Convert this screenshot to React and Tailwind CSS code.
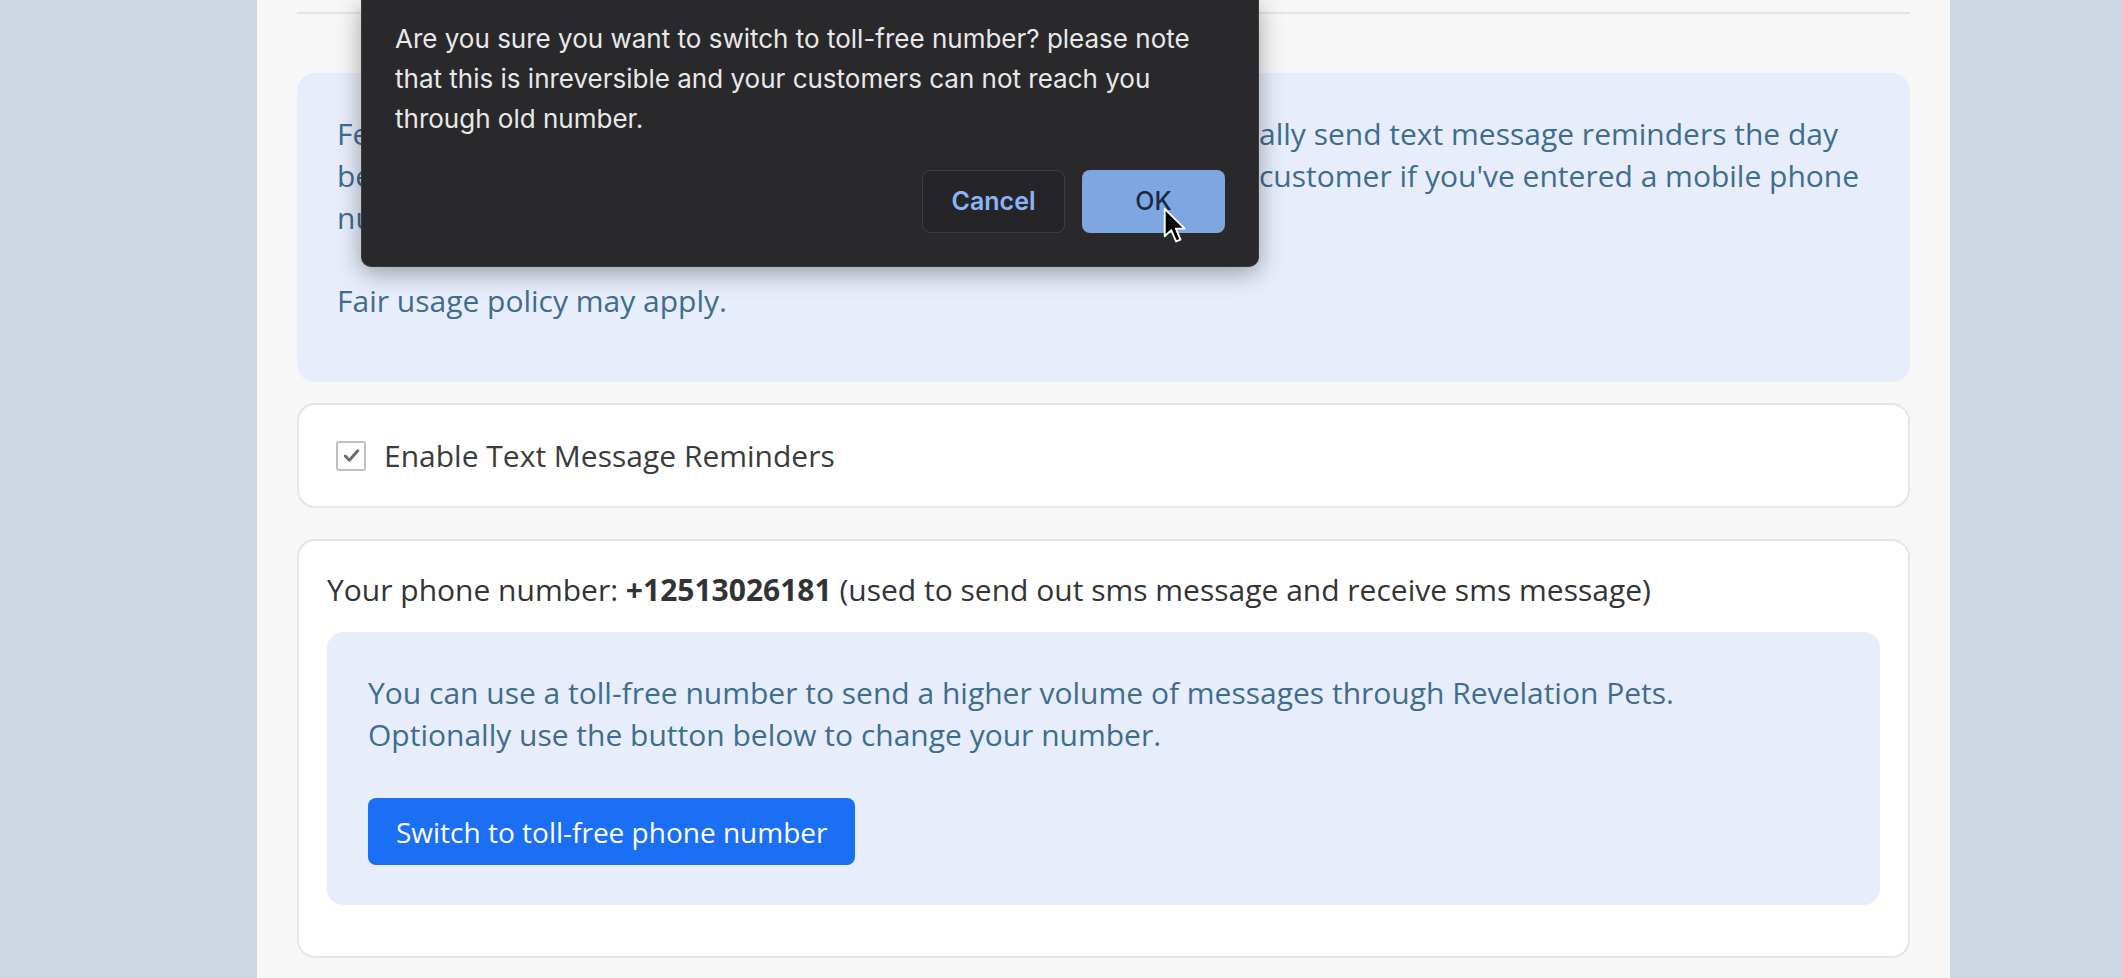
export default function App() {
  return (
    <div className="relative h-[978px] w-full overflow-hidden bg-[#cdd8e3]">
      <div className="ml-[257px] h-full w-[1693px] bg-[#f7f7f7] px-[40px] pt-[12px] font-['Open_Sans',sans-serif]">
        <div className="h-[2px] bg-[#e4e4e4]" />

        {/* SMS info */}
        <div className="mt-[59px] rounded-[18px] bg-[#e7edfb] px-[40px] pt-[40px] pb-[60px] text-[30px] leading-[42px] text-[#3e6d8f]">
          <div className="whitespace-nowrap">
            <div className="flex">
              <span className="w-[922px] shrink-0">Feature: With this option enabled, Revelation Pets will automatic</span>
              <span>ally send text message reminders the day</span>
            </div>
            <div className="flex">
              <span className="w-[922px] shrink-0">before the scheduled grooming or boarding appointment to each</span>
              <span>customer if you've entered a mobile phone</span>
            </div>
            <div>number for them.</div>
          </div>
          <p className="mt-[41px]">Fair usage policy may apply.</p>
        </div>

        {/* Enable checkbox */}
        <div className="mt-[21px] flex h-[105px] items-center gap-[18px] rounded-[18px] border-2 border-[#e6e6e6] bg-white pl-[37px]">
          <div className="flex h-[30px] w-[30px] items-center justify-center rounded-[3px] border-2 border-[#bfbfbf] bg-white">
            <svg viewBox="0 0 20 20" className="h-[21px] w-[21px]" fill="none" stroke="#6b6b6b" strokeWidth="2.8" strokeLinecap="round" strokeLinejoin="round">
              <path d="M4 10.5l4 4 8-9" />
            </svg>
          </div>
          <span className="text-[30px] leading-[42px] text-[#3b3b3b]">Enable Text Message Reminders</span>
        </div>

        {/* Phone number */}
        <div className="mt-[31px] rounded-[18px] border-2 border-[#e6e6e6] bg-white px-[28px] pt-[28px] pb-[51px]">
          <p className="text-[30px] leading-[42px] text-[#333333]">
            Your phone number: <span className="font-bold">+12513026181</span> (used to send out sms message and receive sms message)
          </p>
          <div className="mt-[21px] rounded-[16px] bg-[#e7edfb] px-[41px] py-[40px] text-[30px] leading-[42px] text-[#3e6d8f]">
            <p>
              You can use a toll-free number to send a higher volume of messages through Revelation Pets.
              <br />
              Optionally use the button below to change your number.
            </p>
            <button className="mt-[42px] h-[67px] rounded-[8px] bg-[#1a6ff4] px-[28px] text-[28px] text-white">
              Switch to toll-free phone number
            </button>
          </div>
        </div>
      </div>

      {/* confirm dialog */}
      <div className="absolute left-[361px] top-0 h-[267px] w-[898px] rounded-b-[10px] border border-t-0 border-[#3a3a3c] bg-[#29292b] px-[33px] pt-[19px] shadow-[0_6px_24px_rgba(0,0,0,0.35)] font-['Inter',sans-serif]">
        <p className="text-[26px] leading-[40px] text-[#e8e8ea]">
          Are you sure you want to switch to toll-free number? please note
          <br />
          that this is inreversible and your customers can not reach you
          <br />
          through old number.
        </p>
        <div className="mt-[31px] flex justify-end gap-[17px]">
          <button className="h-[63px] w-[143px] rounded-[8px] border border-[#3e3e42] bg-[#252527] text-[25px] font-semibold text-[#8ab4f8]">
            Cancel
          </button>
          <button className="h-[63px] w-[143px] rounded-[8px] bg-[#7ea7e2] text-[25px] font-medium text-[#1b2a42]">
            OK
          </button>
        </div>
      </div>

      {/* mouse pointer */}
      <svg viewBox="0 0 14 22" className="absolute left-[1163px] top-[207px] h-[38px] w-[24px]">
        <path d="M1 1 L1 17 L4.8 13.4 L7.6 20 L10.2 18.9 L7.5 12.5 L12.6 12.5 Z" fill="#000" stroke="#fff" strokeWidth="1.1" strokeLinejoin="round" />
      </svg>
    </div>
  );
}
